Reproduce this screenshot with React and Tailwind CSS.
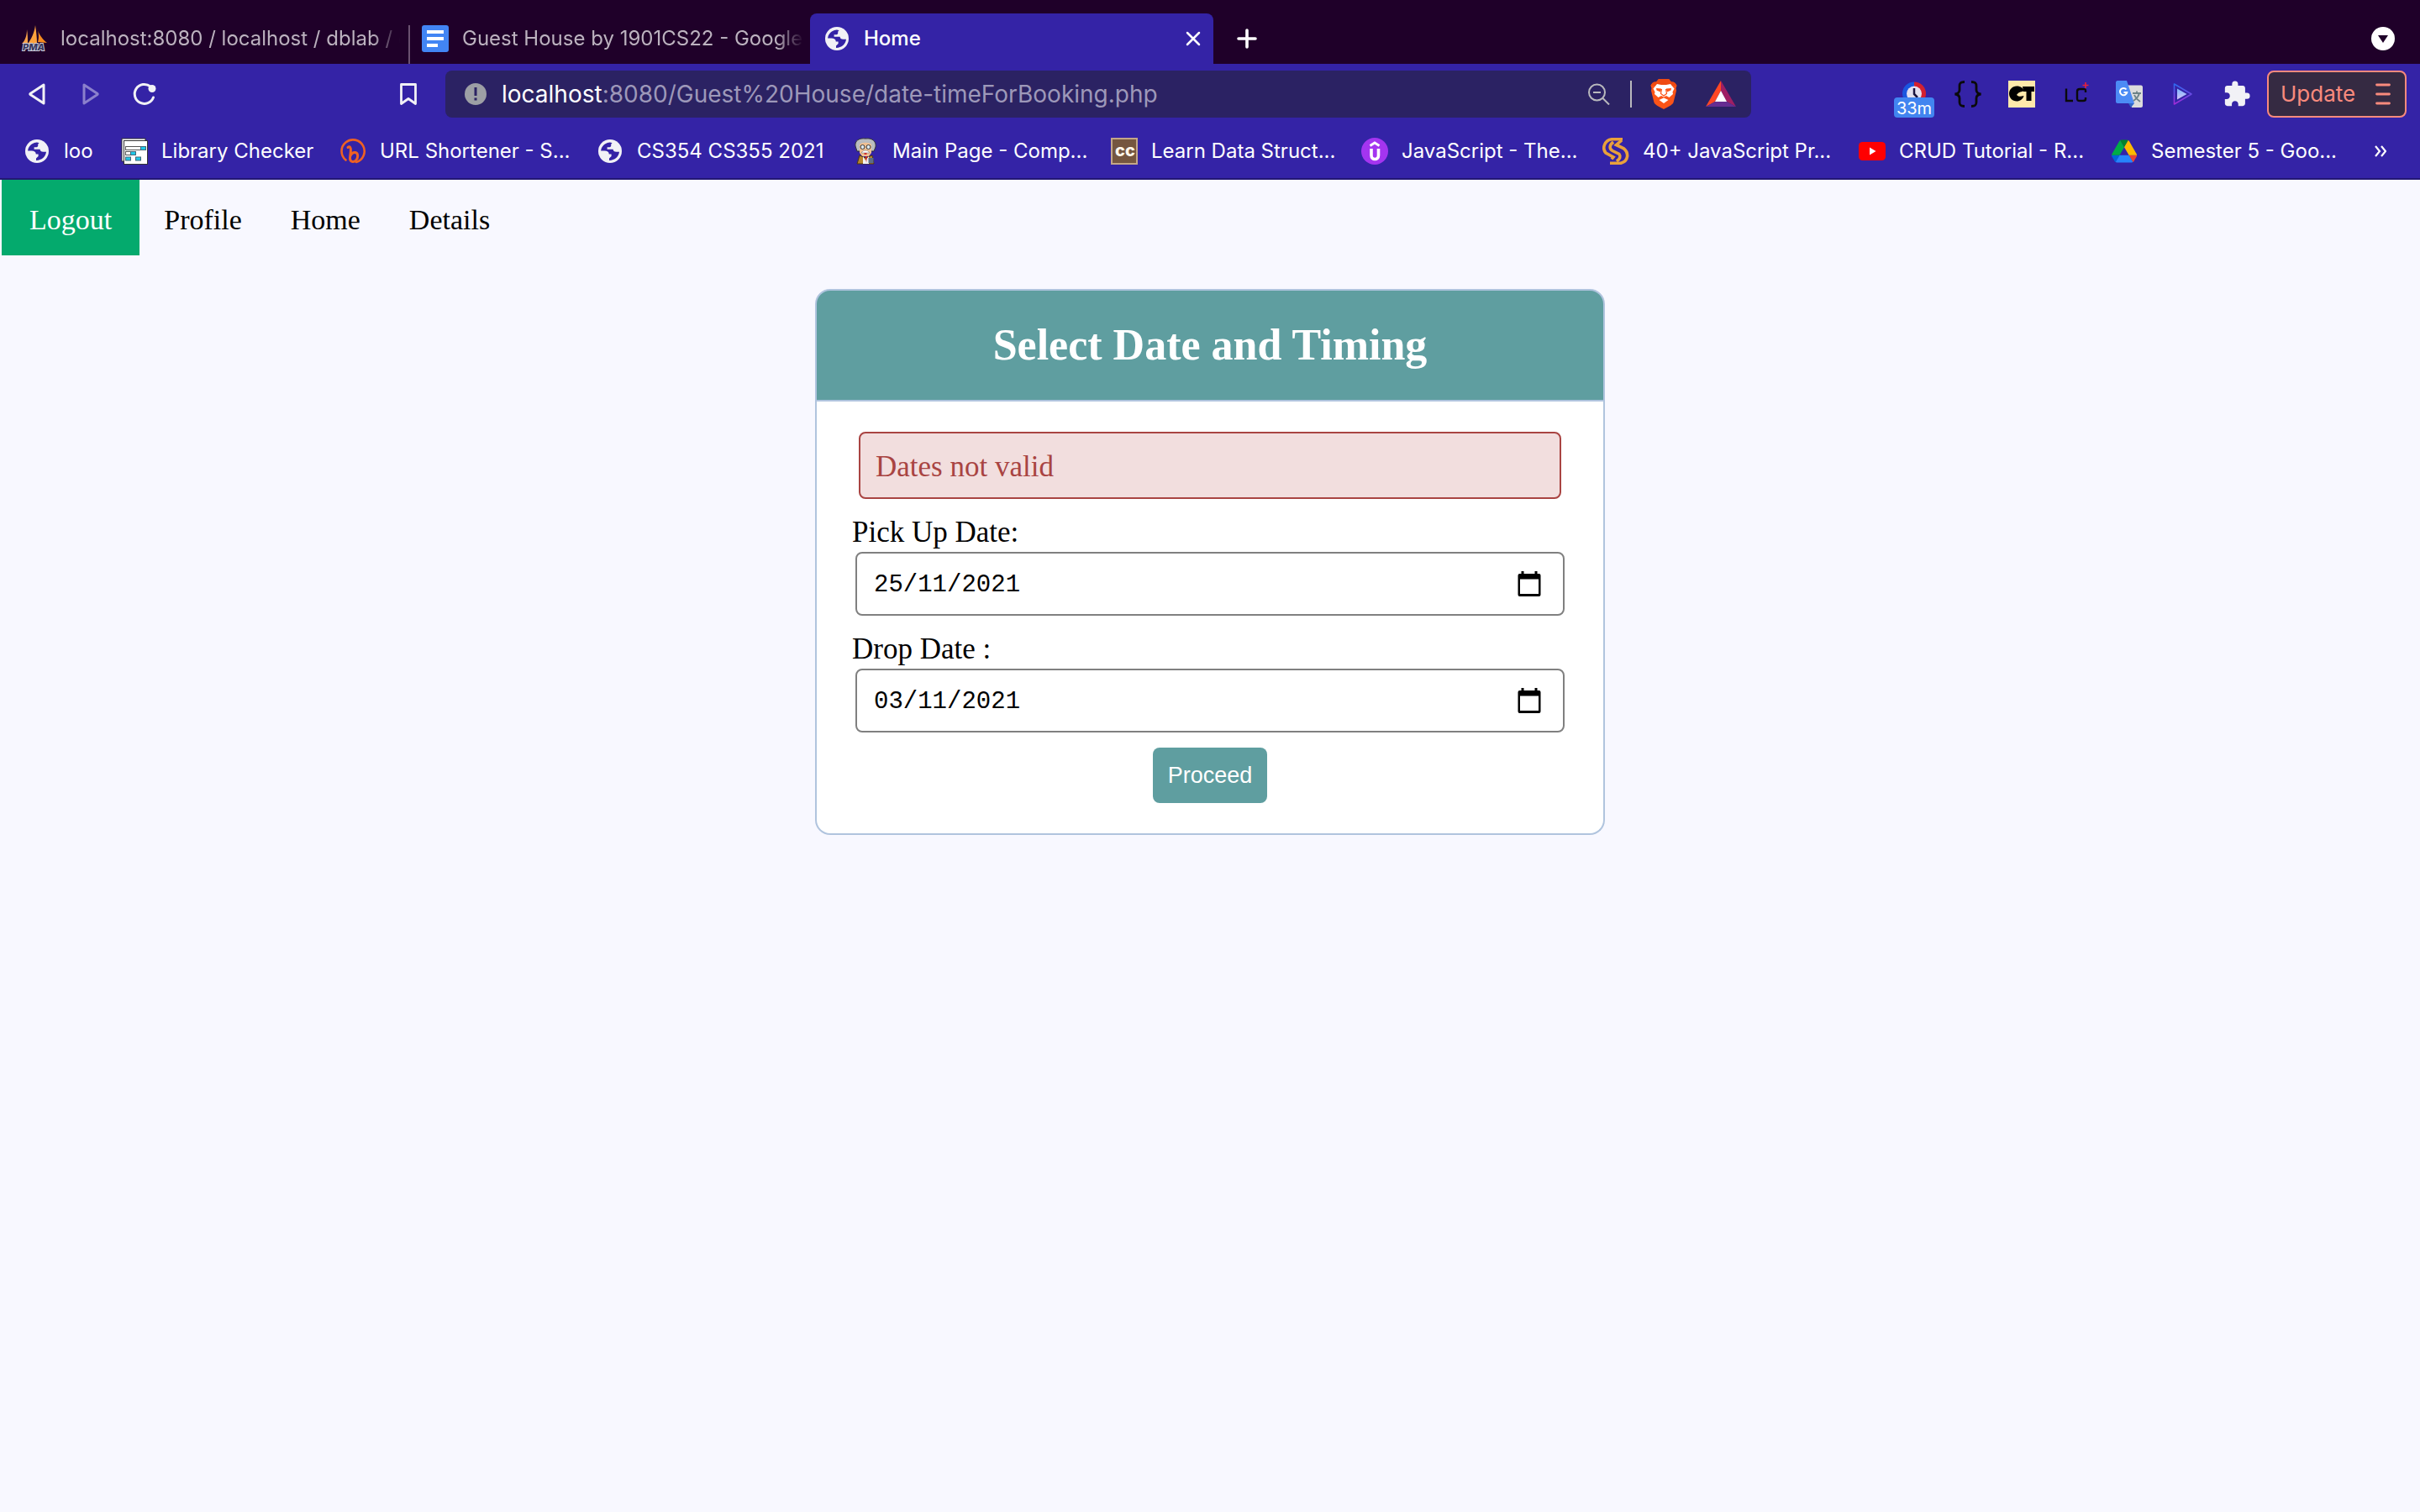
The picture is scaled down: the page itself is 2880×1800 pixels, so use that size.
import React from "react";
import { MdExtension } from "react-icons/md";

function Globe() {
  return (
    <svg viewBox="0 0 32 32" className="size-8 shrink-0" aria-hidden="true">
      <circle cx="16" cy="16" r="14" fill="#f1f1f6" />
      <path
        d="M13 6C8.5 7.5 5.6 11 5.1 15.6H9.5C12.6 15.6 14.6 16.8 14.8 19.4H17.6V22L15 24.4V26.9C21.5 27 26.4 22.5 27 16.8H23.4C21 16.8 19.8 15.8 19.6 13.8H12.6V11.2H15.2C16.9 11.2 17.5 10 17.2 8.6C17 7.6 17.8 7 18.6 6.2C16.8 5.2 14.8 5.3 13 6Z"
        fill="#3423a6"
      />
    </svg>
  );
}

function PmaIcon() {
  return (
    <svg viewBox="0 0 32 32" className="size-8 shrink-0" aria-hidden="true">
      <path d="M8 5C8 12 6 18 2 22L9 22C9 16 9 10 8 5Z" fill="#f7a14a" />
      <path d="M18 0C17 9 13 17 9 22L20 22C20 14 19 7 18 0Z" fill="#fba13c" />
      <path d="M20 3C23 11 22 17 21 20L32 21C27 17 22 11 20 3Z" fill="#f58a1f" />
      <text x="16" y="30" textAnchor="middle" fontSize="11" fontWeight="800" fontStyle="italic" fontFamily="Inter, sans-serif" fill="#35355c" stroke="#c9c9d8" strokeWidth="2" paintOrder="stroke">
        PMA
      </text>
    </svg>
  );
}

function DocsIcon() {
  return (
    <svg viewBox="0 0 32 32" className="size-8 shrink-0" aria-hidden="true">
      <rect width="32" height="32" rx="3" fill="#4285f4" />
      <path d="M6 6h20v4H6zM6 14h20v4H6zM6 22h13v4H6z" fill="#fff" />
    </svg>
  );
}

function LibraryIcon() {
  return (
    <svg viewBox="0 0 32 32" className="size-8 shrink-0" aria-hidden="true">
      <rect x="1" y="1" width="28" height="27" fill="#fff" stroke="#333" />
      <rect x="3.5" y="3.5" width="28" height="28" fill="#fff" stroke="#333" />
      <rect x="5.500" y="10.500" width="24" height="4" fill="#fff" stroke="#555" />
      <rect x="23.5" y="10.500" width="6" height="4" fill="#1fc8e8" stroke="#467" />
      <rect x="5.500" y="16.500" width="12" height="4" fill="#fff" stroke="#555" />
      <rect x="11.5" y="16.500" width="6" height="4" fill="#1fc8e8" stroke="#467" />
      <rect x="5.500" y="23" width="6" height="4" fill="#1fc8e8" stroke="#467" />
      <rect x="17.5" y="23" width="6" height="4" fill="#1fc8e8" stroke="#467" />
    </svg>
  );
}

function BitlyIcon() {
  return (
    <svg viewBox="0 0 32 32" className="size-8 shrink-0" fill="none" stroke="#ee6123" strokeLinecap="round" aria-hidden="true">
      <path d="M7.500 26.500A13.600 13.600 0 1 1 20 29" strokeWidth="2.600" />
      <path d="M10 11.500C12.500 9.500 13.800 12 13.400 16L12.500 24C12.300 29 17 29.500 19.500 27C22.500 24 22.500 18.500 19 17.500C16 17 13.800 19.500 12.800 22" strokeWidth="3" />
    </svg>
  );
}

function EinsteinIcon() {
  return (
    <svg viewBox="0 0 32 32" className="size-8 shrink-0" aria-hidden="true">
      <path d="M4 10C3 4 8 0 16 1C25 0 29 5 28 11L26 16H6Z" fill="#b9bcc0" stroke="#333" />
      <path d="M9 8C12 5 20 5 23 8V18L20 22H12L9 18Z" fill="#f2c193" />
      <path d="M9 21L6 31H26L24 21L16 24Z" fill="#b8862f" stroke="#4a3312" />
      <path d="M13 22L16 27L20 22V31H13Z" fill="#f4f4f4" />
      <path d="M16 22h2l-1 8z" fill="#d1202a" />
      <rect x="19.500" y="24" width="6" height="6" fill="#5b6d86" />
      <circle cx="12.500" cy="11" r="2.500" fill="#dfe9ee" stroke="#333" />
      <circle cx="19.500" cy="11" r="2.500" fill="#dfe9ee" stroke="#333" />
      <path d="M11 18C13 14 19 14 21 18Z" fill="#fff" stroke="#777" strokeWidth="0.600" />
      <rect x="14.500" y="18" width="3" height="2" fill="#c33" />
    </svg>
  );
}

function CodeChefIcon() {
  return (
    <svg viewBox="0 0 32 32" className="size-8 shrink-0" aria-hidden="true">
      <rect x="1" y="1" width="30" height="30" fill="#75563f" stroke="#c3a688" strokeWidth="2" />
      <text x="17" y="22" textAnchor="middle" fontSize="20" fontWeight="800" fontFamily="Inter, sans-serif" fill="#fff6ea">
        cc
      </text>
    </svg>
  );
}

function UdemyIcon() {
  return (
    <svg viewBox="0 0 32 32" className="size-8 shrink-0" fill="none" stroke="#fff" aria-hidden="true">
      <circle cx="16" cy="16" r="16" fill="#a435f0" stroke="none" />
      <path d="M10.500 9.500L16 6L21.500 9.500" strokeWidth="2.800" />
      <path d="M12 13V21C12 27 20.500 27 20.500 21V13" strokeWidth="3.600" />
    </svg>
  );
}

function SIcon() {
  return (
    <svg viewBox="0 0 32 32" className="size-8 shrink-0" fill="none" stroke="#e9a03b" strokeWidth="3.600" aria-hidden="true">
      <path d="M24 1.800H11C3 3 -1 12 4 18L13 23L11 25.500" />
      <path d="M23 3L16.500 8.500L25 12.500C32 18 31 28 22 30.200H9" />
      <path d="M13 5C8 9 8 13 12 15.500L20 19.500C22 22 21 25 17 28" />
    </svg>
  );
}

function YouTubeIcon() {
  return (
    <svg viewBox="0 0 32 32" className="size-8 shrink-0" aria-hidden="true">
      <rect y="5" width="32" height="22" rx="4.500" fill="#f00" />
      <path d="M13 11.500V20.500L20.500 16Z" fill="#fff" />
    </svg>
  );
}

function DriveIcon() {
  return (
    <svg viewBox="0 0 87 78" className="h-8 w-8 shrink-0 p-px" aria-hidden="true">
      <path d="M6.600 66.850l3.850 6.650c.8 1.400 1.950 2.500 3.300 3.300L27.500 53H0c0 1.550.4 3.100 1.200 4.500z" fill="#0066da" />
      <path d="M43.650 25L29.900 1.200c-1.350.8-2.500 1.900-3.300 3.300L1.200 48.500A9.060 9.060 0 000 53h27.500z" fill="#00ac47" />
      <path d="M73.550 76.800c1.350-.8 2.500-1.900 3.300-3.300l1.600-2.750 7.650-13.250c.8-1.400 1.200-2.950 1.200-4.500H59.800l5.850 11.500z" fill="#ea4335" />
      <path d="M43.650 25L57.400 1.200C56.050.4 54.500 0 52.900 0H34.400c-1.600 0-3.150.45-4.500 1.200z" fill="#00832d" />
      <path d="M59.800 53H27.500L13.750 76.800c1.350.8 2.900 1.200 4.500 1.200h50.800c1.600 0 3.150-.45 4.500-1.200z" fill="#2684fc" />
      <path d="M73.400 26.500L60.700 4.500c-.8-1.400-1.950-2.500-3.300-3.300L43.650 25 59.800 53h27.450c0-1.550-.4-3.100-1.200-4.500z" fill="#ffba00" />
    </svg>
  );
}

function BraveIcon() {
  return (
    <svg viewBox="0 0 32 36" className="h-9 w-8" aria-hidden="true">
      <path d="M10 0H22L25 3.500C28 3 30.500 5 31.500 8L30.500 11L31 14L27.500 28C26.500 31 19 34.500 16 36C13 34.500 5.500 31 4.500 28L1 14L1.500 11L.5 8C1.500 5 4 3 7 3.500Z" fill="#fb5418" />
      <path d="M10 0H22L25 3.500C28 3 30.500 5 31.500 8H.5C1.500 5 4 3 7 3.500Z" fill="#ef4a12" />
      <path d="M8 6L13 7H19L24 6L28.500 11.500L26.500 15.500L27 18L22.500 22L19 20L16 21.500L13 20L9.500 22L5 18L5.500 15.500L3.500 11.500Z" fill="#fff" />
      <path d="M16 22.500L21.500 25L16 29L10.500 25Z" fill="#fff" />
      <path d="M7 11L13 11.500V13L12 15.500L7.500 13.500ZM25 11L19 11.500V13L20 15.500L24.500 13.500Z" fill="#fb5418" />
      <path d="M13.500 12L12.500 17.500L16 20L19.500 17.500L18.500 12" fill="none" stroke="#fb5418" strokeWidth="1.200" />
    </svg>
  );
}

function BatIcon() {
  return (
    <svg viewBox="0 0 36 32" className="h-8 w-9" aria-hidden="true">
      <path d="M18 0L0 31L11 25L18 12Z" fill="#ff4724" />
      <path d="M18 0L36 31L25 25L18 12Z" fill="#9e1f63" />
      <path d="M0 31H36L25 25H11Z" fill="#662d91" />
      <path d="M18 12L11 25H25Z" fill="#fff" />
    </svg>
  );
}

function TimerIcon() {
  return (
    <svg viewBox="0 0 32 32" className="size-8 shrink-0" aria-hidden="true">
      <path d="M16 1.500A14 14 0 0 0 16 29.500Z" fill="#1a56e0" />
      <path d="M16 1.500A14 14 0 0 1 16 29.500Z" fill="#d3212f" />
      <circle cx="16" cy="15.500" r="9" fill="#e4e0f0" />
      <path d="M16 9V16L20 20" fill="none" stroke="#1c1440" strokeWidth="2.500" />
    </svg>
  );
}

function BracesIcon() {
  return (
    <svg viewBox="0 0 32 32" className="size-8" fill="none" stroke="#0a0a0a" strokeWidth="2.800" aria-hidden="true">
      <path d="M12 1.500C7 1.500 6 3 6 6.500V11C6 14 4.500 15.500 0.500 16C4.500 16.500 6 18 6 21V25.500C6 29 7 30.500 12 30.500" />
      <path d="M20 1.500C25 1.500 26 3 26 6.500V11C26 14 27.500 15.500 31.500 16C27.500 16.500 26 18 26 21V25.500C26 29 25 30.500 20 30.500" />
    </svg>
  );
}

function CtIcon() {
  return (
    <svg viewBox="0 0 32 32" className="size-8" aria-hidden="true">
      <rect width="32" height="32" fill="#ffe9ab" />
      <path d="M10 6.500C15 6.500 18 9 18.500 12.500C14 13.500 12 14 10 17C12.500 19.500 15 19 18.500 18C17.500 22 14 24.500 10 24.500C5 24.500 1 20.500 1 15.500C1 10.500 5 6.500 10 6.500Z" fill="#000" />
      <path d="M17 7H31V13H27.500V24H21.500V13H18Z" fill="#000" />
    </svg>
  );
}

function LcIcon() {
  return (
    <svg viewBox="0 0 32 32" className="size-8" fill="none" stroke="#0a0a0a" strokeWidth="2.400" aria-hidden="true">
      <path d="M5 9.500V24H13M28 14V12C28 10 27 10 25 10H21C18.500 10 18 11 18 13V21C18 23.500 18.500 24 21 24H25C27 24 28 23.500 28 22V20" />
      <path d="M28 2V9M24.500 5.500H31.500" stroke="#e8203a" strokeWidth="1.600" />
    </svg>
  );
}

function TranslateIcon() {
  return (
    <svg viewBox="0 0 32 32" className="size-8" aria-hidden="true">
      <path d="M12 5.500H30C31 5.500 32 6.500 32 7.500V30C32 31 31 32 30 32H19Z" fill="#dcdcdc" />
      <path d="M2 0H13L22 27H2C1 27 0 26 0 25V2C0 1 1 0 2 0Z" fill="#4c8bf5" />
      <path d="M15 27H22L18 32Z" fill="#3367c8" />
      <path d="M20 15H30M25 12.500V15M28 15C27 19 24 22 21 24M22 17C23.500 20.500 26 23 29 25" fill="none" stroke="#6d8388" strokeWidth="1.800" />
      <path d="M12.500 10.500A4.200 4.200 0 1 0 13.300 14H9.500" fill="none" stroke="#fff" strokeWidth="2" />
    </svg>
  );
}

function PlayIcon() {
  return (
    <svg viewBox="0 0 32 32" className="size-8" aria-hidden="true">
      <defs>
        <linearGradient id="playEdge" x1="0" y1="0" x2="0" y2="1">
          <stop offset="0" stopColor="#2d6bf0" />
          <stop offset="1" stopColor="#a32ad6" />
        </linearGradient>
        <linearGradient id="playFill" x1="0" y1="0" x2="0" y2="1">
          <stop offset="0" stopColor="#7cb6ff" />
          <stop offset="1" stopColor="#d4c3f7" />
        </linearGradient>
      </defs>
      <path d="M5.500 4V28L26 16Z" fill="none" stroke="url(#playEdge)" strokeWidth="1.600" strokeLinejoin="round" />
      <path d="M9 9.500V22.500L20.500 16Z" fill="url(#playFill)" />
    </svg>
  );
}

const bookmarks = [
  { label: "loo", icon: Globe, width: "w-[116px]" },
  { label: "Library Checker", icon: LibraryIcon, width: "w-[260px]" },
  { label: "URL Shortener - S...", icon: BitlyIcon, width: "w-[306px]" },
  { label: "CS354 CS355 2021", icon: Globe, width: "w-[304px]" },
  { label: "Main Page - Comp...", icon: EinsteinIcon, width: "w-[308px]" },
  { label: "Learn Data Struct...", icon: CodeChefIcon, width: "w-[298px]" },
  { label: "JavaScript - The...", icon: UdemyIcon, width: "w-[287px]" },
  { label: "40+ JavaScript Pr...", icon: SIcon, width: "w-[305px]" },
  { label: "CRUD Tutorial - R...", icon: YouTubeIcon, width: "w-[300px]" },
  { label: "Semester 5 - Goo...", icon: DriveIcon, width: "w-[280px]" },
];

const extensions = [
  { name: "JSON viewer", icon: BracesIcon },
  { name: "CT", icon: CtIcon },
  { name: "LC", icon: LcIcon },
  { name: "Translate", icon: TranslateIcon },
  { name: "Player", icon: PlayIcon },
];

const toolButton = "flex h-14 w-16 shrink-0 items-center justify-center";
const fade = "min-w-0 flex-1 overflow-hidden text-left whitespace-nowrap [mask-image:linear-gradient(to_right,black_92%,transparent)]";

function TabStrip() {
  return (
    <div className="flex h-[76px] items-end bg-[#1f0029] text-[#bcb2bf]">
      <button className="flex h-[60px] w-[488px] items-center gap-4 pr-3 pl-6">
        <PmaIcon />
        <span className={fade}>localhost:8080 / localhost / dblab / d</span>
      </button>
      <span className="h-[46px] w-[2px] shrink-0 -ml-[2px] bg-[#6a5170]" />
      <button className="flex h-[60px] w-[476px] items-center gap-4 pr-2 pl-3.5">
        <DocsIcon />
        <span className={fade}>Guest House by 1901CS22 - Google</span>
      </button>
      <div className="flex h-[60px] w-[480px] items-center gap-4 rounded-t-lg bg-[#3423a6] pr-[14px] pl-4 font-medium text-white">
        <Globe />
        <button className="flex-1 text-left">Home</button>
        <button aria-label="Close tab">
          <svg viewBox="0 0 20 20" className="size-5" stroke="#fff" strokeWidth="2.500" strokeLinecap="round" aria-hidden="true">
            <path d="M3 3L17 17M17 3L3 17" />
          </svg>
        </button>
      </div>
      <button className="ml-6 flex h-[60px] w-8 items-center justify-center" aria-label="New tab">
        <svg viewBox="0 0 28 28" className="size-7" stroke="#fff" strokeWidth="3.600" strokeLinecap="round" aria-hidden="true">
          <path d="M14 4V24M4 14H24" />
        </svg>
      </button>
      <button className="mr-[30px] ml-auto flex h-[60px] items-center" aria-label="Search tabs">
        <svg viewBox="0 0 28 28" className="size-7" aria-hidden="true">
          <circle cx="14" cy="14" r="14" fill="#fff" />
          <path d="M8 10H20L14 19Z" fill="#1f0029" />
        </svg>
      </button>
    </div>
  );
}

function Toolbar() {
  return (
    <div className="flex h-[72px] items-center pr-4 pl-3">
      <button className={toolButton} aria-label="Back">
        <svg viewBox="0 0 32 32" className="size-8" fill="none" stroke="#f1f1f6" strokeWidth="3" strokeLinejoin="round" aria-hidden="true">
          <path d="M24 5V27L8 16.500Q7.500 16 8 15.500Z" />
        </svg>
      </button>
      <button className={toolButton} aria-label="Forward">
        <svg viewBox="0 0 32 32" className="size-8" fill="none" stroke="#8b80cc" strokeWidth="3" strokeLinejoin="round" aria-hidden="true">
          <path d="M8 5V27L24 16.500Q24.500 16 24 15.500Z" />
        </svg>
      </button>
      <button className={toolButton} aria-label="Reload">
        <svg viewBox="0 0 32 32" className="size-8" fill="none" stroke="#f1f1f6" strokeWidth="3" strokeLinecap="round" aria-hidden="true">
          <path d="M26.500 20A11.500 11.500 0 1 1 23 7" />
          <circle cx="25" cy="9.500" r="4.500" fill="#f1f1f6" stroke="none" />
        </svg>
      </button>
      <button className="ml-[250px] flex h-14 w-16 shrink-0 items-center justify-center" aria-label="Bookmark this page">
        <svg viewBox="0 0 32 32" className="size-8" fill="none" stroke="#f1f1f6" strokeWidth="2.800" strokeLinejoin="round" aria-hidden="true">
          <path d="M7.500 4.500H24.500V27.500L16 21.500L7.500 27.500Z" />
        </svg>
      </button>
      <div className="ml-3 flex h-14 min-w-0 flex-1 items-center rounded-lg bg-[#2b2263] pr-[18px] pl-[23px]">
        <svg viewBox="0 0 26 26" className="size-[26px] shrink-0" aria-hidden="true">
          <circle cx="13" cy="13" r="13" fill="#9d9fa5" />
          <path d="M11.500 5h3v10h-3zM11.500 17.500h3v3h-3z" fill="#2b2263" />
        </svg>
        <p className="ml-[18px] min-w-0 flex-1 truncate text-[28px] leading-9 text-[#9d98b9]">
          <span className="text-white">localhost</span>:8080/Guest%20House/date-timeForBooking.php
        </p>
        <button aria-label="Zoom">
          <svg viewBox="0 0 26 26" className="size-[26px]" fill="none" stroke="#b9b9bd" strokeWidth="2" aria-hidden="true">
            <circle cx="10.500" cy="11" r="9.500" />
            <path d="M6 11H15M17.500 18L25 25.500" />
          </svg>
        </button>
        <span className="ml-6 h-8 w-[2px] bg-[#b9b9bd]" />
        <button className="ml-[22px]" aria-label="Shields">
          <BraveIcon />
        </button>
        <button className="ml-[34px]" aria-label="Rewards">
          <BatIcon />
        </button>
      </div>
      <button className="ml-[162px] flex h-14 w-16 shrink-0 flex-col items-center overflow-hidden pt-3" aria-label="Timer, 33m">
        <TimerIcon />
        <span className="relative -mt-3 h-6 w-12 shrink-0 rounded bg-[#4285f0] text-[20px] leading-[26px] text-white">33m</span>
      </button>
      {extensions.map(({ name, icon: Icon }) => (
        <button key={name} className={toolButton} aria-label={name}>
          <Icon />
        </button>
      ))}
      <button className={toolButton} aria-label="Extensions">
        <MdExtension className="size-[34px] text-[#f1f1f6]" />
      </button>
      <button className="ml-1 flex h-14 w-[166px] shrink-0 items-center justify-between rounded-lg border-2 border-[#f98a7d] bg-[#352a42] pr-[17px] pl-[14px] text-[26px] text-[#f98a7d]">
        Update
        <svg viewBox="0 0 18 26" className="h-[26px] w-[18px]" stroke="#f98a7d" strokeWidth="2.800" strokeLinecap="round" aria-hidden="true">
          <path d="M1.500 2H16.500M1.500 13H16.500M1.500 24H16.500" />
        </svg>
      </button>
    </div>
  );
}

function BookmarksBar() {
  return (
    <nav className="flex h-16 items-center pl-7 text-white" aria-label="Bookmarks">
      {bookmarks.map(({ label, icon: Icon, width }) => (
        <a key={label} href="#bookmark" className={`flex shrink-0 items-center gap-4 whitespace-nowrap ${width}`}>
          <Icon />
          <span>{label}</span>
        </a>
      ))}
      <button className="mr-10 ml-auto" aria-label="More bookmarks">
        <svg viewBox="0 0 14 16" className="h-4 w-[14px]" fill="none" stroke="#fff" strokeWidth="2.200" aria-hidden="true">
          <path d="M1 2L6 8L1 14M8 2L13 8L8 14" />
        </svg>
      </button>
    </nav>
  );
}

function DateField({ id, label, value }) {
  return (
    <div className="mt-5">
      <label htmlFor={id} className="block leading-10">
        {label}
      </label>
      <div className="mx-1 mt-[3px] flex h-[76px] items-center rounded-lg border-2 border-[#808080] bg-white pr-[26px] pl-5">
        <input
          id={id}
          type="text"
          defaultValue={value}
          className="min-w-0 flex-1 pt-1 font-['Liberation_Mono',monospace] text-[29px] leading-9 outline-none"
        />
        <button type="button" aria-label={`Open calendar for ${label}`}>
          <svg viewBox="0 0 28 30" className="h-[30px] w-7" aria-hidden="true">
            <path d="M4.500 0h3v3h13V0h3v3H25.500Q27.500 3 27.500 5V28Q27.500 30 25.500 30H2.500Q.5 30 .5 28V5Q.5 3 2.500 3H4.500ZM3 9.500V27H25V9.500Z" fillRule="evenodd" />
          </svg>
        </button>
      </div>
    </div>
  );
}

export default function App() {
  return (
    <div className="flex min-h-screen flex-col bg-[#f8f8ff]">
      <header className="border-b-2 border-[#231873] bg-[#3423a6] font-['Inter',sans-serif] text-[24px] leading-8">
        <TabStrip />
        <Toolbar />
        <BookmarksBar />
      </header>

      <div className="font-['Liberation_Serif',serif] text-[35px] leading-10 text-black">
        <nav className="ml-[2px] flex text-[34px]" aria-label="Site">
          <a href="#logout" className="bg-[#04aa6d] px-[33px] pt-7 pb-[22px] text-white">Logout</a>
          <a href="#profile" className="px-[29px] pt-7 pb-[22px]">Profile</a>
          <a href="#home" className="px-[29px] pt-7 pb-[22px]">Home</a>
          <a href="#details" className="px-[29px] pt-7 pb-[22px]">Details</a>
        </nav>

        <main className="mx-auto mt-10 w-full max-w-[940px]">
          <h2 className="rounded-t-[18px] border-2 border-[#b0c4de] bg-[#5f9ea0] py-[35px] text-center text-[52px] leading-[60px] font-bold text-white">
            Select Date and Timing
          </h2>
          <form className="rounded-b-[18px] border-2 border-t-0 border-[#b0c4de] bg-white px-[42px] py-9">
            <p role="alert" className="mx-2 rounded-lg border-2 border-[#a94442] bg-[#f2dede] px-[18px] pt-5 pb-4 text-[#a94442]">
              Dates not valid
            </p>
            <DateField id="pickup" label="Pick Up Date:" value="25/11/2021" />
            <DateField id="drop" label="Drop Date :" value="03/11/2021" />
            <button
              type="button"
              className="mx-auto mt-[18px] block h-[66px] rounded-lg bg-[#5f9ea0] px-[18px] font-['Liberation_Sans',sans-serif] text-[27px] leading-8 text-white"
            >
              Proceed
            </button>
          </form>
        </main>
      </div>
    </div>
  );
}
